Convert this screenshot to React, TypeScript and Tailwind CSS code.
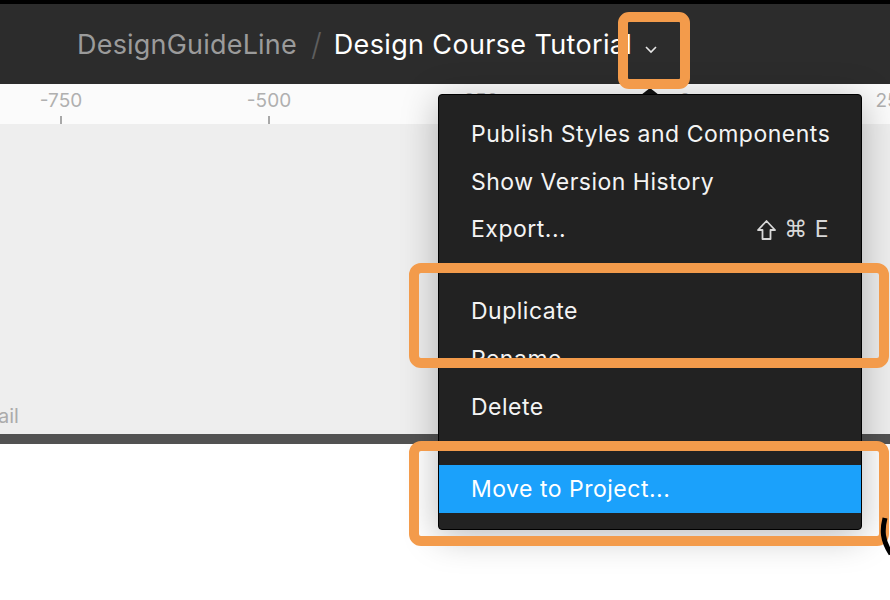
import React from "react";

const font = { fontFamily: "Inter, 'Noto Sans', sans-serif" };

function Item({ label, shortcut, active }: { label: string; shortcut?: boolean; active?: boolean }) {
  return (
    <div
      className={`h-[48px] flex items-center justify-between whitespace-nowrap pl-[32px] pr-[32px] text-[23px] tracking-[0.5px] ${
        active ? "bg-[#1ba1fb] text-white" : "text-[#f4f4f4]"
      }`}
    >
      <span className="whitespace-nowrap">{label}</span>
      {shortcut && (
        <span className="flex items-center gap-[7px] text-[#d8d8d8]">
          <svg width="21" height="22" viewBox="0 0 21 22">
            <path d="M10.5 2 L19 11 L14.5 11 L14.5 20 L6.5 20 L6.5 11 L2 11 Z" fill="none" stroke="#d8d8d8" strokeWidth="1.8" strokeLinejoin="round" />
          </svg>
          <span className="text-[23px]" style={{ fontFamily: "'DejaVu Sans', sans-serif" }}>⌘</span>
          <span className="text-[23px]">E</span>
        </span>
      )}
    </div>
  );
}

const ticks = [
  { x: 61, l: "-750" },
  { x: 269, l: "-500" },
  { x: 477, l: "-250" },
  { x: 685, l: "0" },
  { x: 893, l: "250" },
];

export default function App() {
  return (
    <div className="relative w-[890px] h-[600px] overflow-hidden bg-white flex flex-col" style={font}>
      <div className="h-[4px] bg-black shrink-0" />
      <div className="h-[80px] bg-[#2c2c2c] flex items-center pl-[77px] pt-[2px] shrink-0">
        <span className="text-[27px] text-[#9b9b9b] tracking-[0.2px] whitespace-nowrap">DesignGuideLine</span>
        <span className="text-[31px] text-[#5e5e5e] font-light ml-[14px] mr-[12px]">/</span>
        <span className="text-[27px] text-white tracking-[0.35px] whitespace-nowrap">Design Course Tutorial</span>
        <svg className="ml-[12px] mt-[8px]" width="14" height="9" viewBox="0 0 14 9">
          <path d="M2 2 L7 7 L12 2" fill="none" stroke="#e6e6e6" strokeWidth="1.6" />
        </svg>
      </div>
      <div className="relative h-[40px] bg-[#fbfbfb] shrink-0">
        {ticks.map((t) => (
          <React.Fragment key={t.l}>
            <span
              className="absolute top-[3px] text-[19px] text-[#b0b0b0] -translate-x-1/2 whitespace-nowrap"
              style={{ left: t.x }}
            >
              {t.l}
            </span>
            <span className="absolute top-[32px] w-[1.5px] h-[8px] bg-[#a8a8a8]" style={{ left: t.x - 1 }} />
          </React.Fragment>
        ))}
      </div>
      <div className="h-[310px] bg-[#eeeeee] flex items-end pb-[3px] shrink-0">
        <span className="text-[20px] text-[#ababab] -ml-[2px]">ail</span>
      </div>
      <div className="h-[10px] bg-[#525252] shrink-0" />
      <div className="flex-1 bg-white" />

      {/* dropdown caret */}
      <div className="absolute left-[641px] top-[88px] w-0 h-0 border-l-[9px] border-r-[9px] border-b-[7px] border-l-transparent border-r-transparent border-b-[#111]" />

      {/* menu */}
      <div className="absolute left-[438px] top-[94px] w-[424px] h-[436px] bg-[#222222] border border-black rounded-[4px] shadow-[0_6px_36px_rgba(0,0,0,0.28)] pt-[15px] pb-[16px] flex flex-col">
        <Item label="Publish Styles and Components" />
        <Item label="Show Version History" />
        <Item label="Export..." shortcut />
        <div className="h-[34px]" />
        <Item label="Duplicate" />
        <Item label="Rename" />
        <Item label="Delete" />
        <div className="h-[34px]" />
        <Item label="Move to Project..." active />
      </div>

      {/* orange highlight boxes */}
      <div className="absolute left-[618px] top-[12px] w-[72px] h-[77px] border-[10px] border-[#f39b4b] rounded-[11px]" />
      <div className="absolute left-[409px] top-[263px] w-[480px] h-[105px] border-[10px] border-[#f39b4b] rounded-[12px]" />
      <div className="absolute left-[409px] top-[441px] w-[480px] h-[105px] border-[10px] border-[#f39b4b] rounded-[12px]" />

      {/* cursor fragment */}
      <svg className="absolute left-[876px] top-[512px]" width="16" height="50" viewBox="0 0 16 50">
        <path d="M9 6 C6 18 6 28 15 42" fill="none" stroke="#000" strokeWidth="5" />
      </svg>
    </div>
  );
}
